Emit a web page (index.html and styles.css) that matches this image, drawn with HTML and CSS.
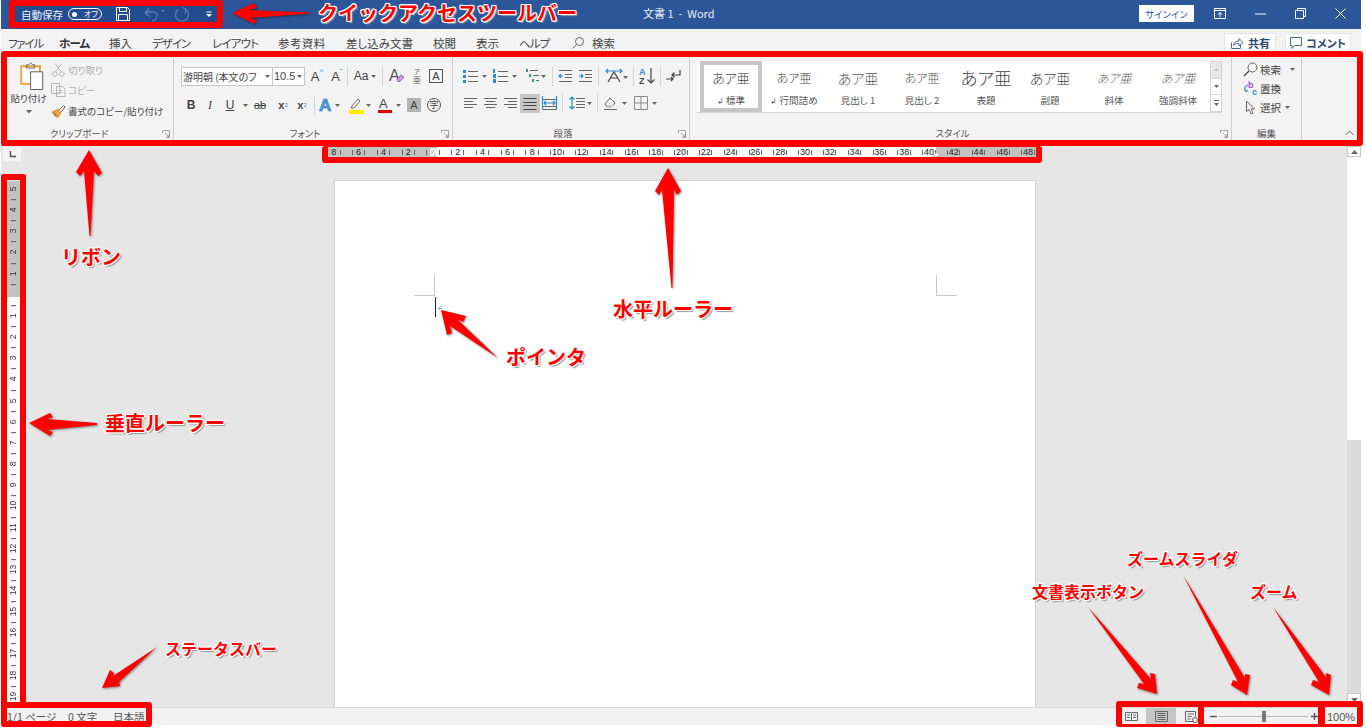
FILE: index.html
```html
<!DOCTYPE html>
<html lang="ja">
<head>
<meta charset="utf-8">
<title>Word UI</title>
<link rel="stylesheet" href="styles.css">
</head>
<body>
<div class="app">
  <header class="titlebar">
    <div class="qat">
      <span class="autosave">自動保存</span>
      <span class="toggle"><i class="knob"></i><span class="off">オフ</span></span>
      <svg class="qi-save" width="16" height="16" viewBox="0 0 16 16"><path class="wl" d="M1.500 1.500h11l2 2v11h-13zM4.500 1.500v4h7v-4M3.500 14.500v-6h9v6"/></svg>
      <svg class="qi-undo" width="24" height="16" viewBox="0 0 24 16"><path class="fl" d="M2 7.500 6 2M2 7.500l5 3M2 7.500c6-3 12-2 12 2 0 3-3 5-5 5.500"/><path class="fc" d="M18 4h4l-2 2.500z"/></svg>
      <svg class="qi-redo" width="18" height="16" viewBox="0 0 18 16"><path class="fl" d="M5 3.500a6.500 6.500 0 1 0 8 0M9 1l4 2.500-1 4"/></svg>
      <svg class="qi-more" width="8" height="8" viewBox="0 0 8 8"><path class="wl" d="M1.500 2h5"/><path class="wf" d="M1 4h6l-3 3z"/></svg>
    </div>
    <div class="doctitle">文書 1&nbsp;&nbsp;-&nbsp;&nbsp;Word</div>
    <div class="winctl">
      <span class="signin">サインイン</span>
      <span class="wb"><svg width="12" height="11" viewBox="0 0 12 11"><path class="wl" d="M.5.500h11v10H.500zM.5 2.500h11M6 9V4.500M4 6.500l2-2 2 2"/></svg></span>
      <span class="wb"><svg width="11" height="2" viewBox="0 0 11 2"><path class="wl" d="M0 1h11"/></svg></span>
      <span class="wb"><svg width="11" height="11" viewBox="0 0 11 11"><path class="wl" d="M.5 2.500h8v8h-8zM2.500 2.500v-2h8v8h-2"/></svg></span>
      <span class="wb"><svg width="11" height="11" viewBox="0 0 11 11"><path class="wl" d="M.5.500l10 10M10.500.500l-10 10"/></svg></span>
    </div>
  </header>

  <nav class="tabs">
    <span class="tab t-file">ファイル</span>
    <span class="tab t-home">ホーム</span>
    <span class="tab t-ins">挿入</span>
    <span class="tab t-des">デザイン</span>
    <span class="tab t-lay">レイアウト</span>
    <span class="tab t-ref">参考資料</span>
    <span class="tab t-mail">差し込み文書</span>
    <span class="tab t-rev">校閲</span>
    <span class="tab t-view">表示</span>
    <span class="tab t-help">ヘルプ</span>
    <svg class="t-lens" width="14" height="14" viewBox="0 0 14 14"><circle class="ln" cx="8.500" cy="5.500" r="4"/><path class="ln" d="M5.500 8.500l-4 4"/></svg>
    <span class="tab t-search">検索</span>
    <span class="sharebtn s1"><svg width="14" height="13" viewBox="0 0 14 13"><path class="bl" d="M1.500 5.500v6h9v-4M3.500 8.500c0-3 2.500-4.500 5.500-4.500V1.500l4 4-4 3.500V6.500c-2 0-4 .5-5.500 2"/></svg><b>共有</b></span>
    <span class="sharebtn s2"><svg width="12" height="12" viewBox="0 0 12 12"><path class="bl" d="M.500.500h11v8H4.500l-2.500 3v-3H.500z"/></svg><b>コメント</b></span>
  </nav>

  <section class="ribbon">
    <div class="group g-clip">
      <div class="clipbody">
        <div class="paste">
          <svg width="26" height="28" viewBox="0 0 26 30"><path class="or" d="M1.500 4.500h20v19h-20z"/><path class="ln" d="M7 4.500V3h2.500L11.500.8 13.500 3H16v3.500H7z"/><path class="dk" d="M11.500 10.500h13v19h-13z"/></svg>
          <span class="pastelabel">貼り付け</span>
          <svg class="pastecar" width="6" height="4" viewBox="0 0 6 4"><path class="cr" d="M0 0h6L3 3.500z"/></svg>
        </div>
        <div class="cliplist">
          <div class="clipitem dim"><svg width="13" height="14" viewBox="0 0 13 14"><path class="gl" d="M3 .5l6 8M10 .5l-6 8"/><circle class="gl" cx="3" cy="11" r="2.300"/><circle class="gl" cx="10" cy="11" r="2.300"/></svg><span>切り取り</span></div>
          <div class="clipitem dim"><svg width="15" height="14" viewBox="0 0 15 14"><path class="gl" d="M.5.500h8v10h-8zM5.500 3.500h6l2.500 2.500v7.500H5.500zM7.500 7.500h4M7.500 9.500h4"/></svg><span>コピー</span></div>
          <div class="clipitem"><svg width="15" height="14" viewBox="0 0 15 14"><path class="brush" d="M1 8l6-3 3 4-3 4.500C5 13 2 11 1 8z"/><path class="ln" d="M8 6l4.500-4.500 1.500 1.500L10 8"/><path class="ln" d="M3 8.500l2.500 3.500"/></svg><span>書式のコピー/貼り付け</span></div>
        </div>
      </div>
      <div class="glabel">クリップボード</div>
      <svg class="launch" width="8" height="8" viewBox="0 0 8 8"><path class="lg" d="M.5 3V.5H7.500v7H5M3 3l4 4M4 7h3V4"/></svg>
    </div>

    <div class="group g-font">
      <div class="row r1">
        <div class="fbox fname"><span>游明朝 (本文のフ</span><svg width="5" height="3" viewBox="0 0 5 3"><path class="cr" d="M0 0h5L2.500 3z"/></svg></div>
        <div class="fbox fsize"><span>10.5</span><svg width="5" height="3" viewBox="0 0 5 3"><path class="cr" d="M0 0h5L2.500 3z"/></svg></div>
        <span class="btn w20 mlt2 tt big">A<sup class="up">^</sup></span>
        <span class="btn w20 tt big">A<sup class="dn">ˇ</sup></span>
        <span class="sep"></span>
        <span class="btn w34 tt aa">Aa<svg width="5" height="3" viewBox="0 0 5 3"><path class="cr" d="M0 0h5L2.500 3z"/></svg></span>
        <span class="sep"></span>
        <span class="btn w28"><svg width="16" height="14" viewBox="0 0 16 14"><text class="ia" x="0" y="12">A</text><path class="pur" d="M8 10l4-4 3 2-4 4.500H9z"/></svg></span>
        <span class="btn w12 furi"><small>ア</small><em>亜</em></span>
        <span class="btn w26"><span class="boxa">A</span></span>
      </div>
      <div class="row r2">
        <span class="btn w20 tb">B</span>
        <span class="btn w18 ti">I</span>
        <span class="btn w22 tu">U</span>
        <span class="btn w8"><svg width="5" height="3" viewBox="0 0 5 3"><path class="cr" d="M0 0h5L2.500 3z"/></svg></span>
        <span class="btn w22 ts">ab</span>
        <span class="btn w24 tx">x<sub>2</sub></span>
        <span class="btn w14 tx">x<sup>2</sup></span>
        <span class="sep ml5"></span>
        <span class="btn w28"><svg width="28" height="18" viewBox="0 0 28 18"><text class="ae" x="4" y="15">A</text><path class="cr" d="M20 8h5l-2.500 3z"/></svg></span>
        <span class="btn w28"><svg width="28" height="18" viewBox="0 0 28 18"><path class="bp" d="M9 10l6-7 2 2-6 7H8z"/><rect class="yl" x="6" y="14" width="15" height="4"/><path class="cr" d="M23 8h5l-2.500 3z"/></svg></span>
        <span class="btn w30"><svg width="30" height="18" viewBox="0 0 30 18"><text class="ab" x="8" y="12">A</text><rect class="rd" x="7" y="14" width="14" height="3"/><path class="cr" d="M25 8h5l-2.500 3z"/></svg></span>
        <span class="btn w26"><span class="shaded">A</span></span>
        <span class="btn w14"><span class="circ">字</span></span>
      </div>
      <div class="glabel">フォント</div>
      <svg class="launch" width="8" height="8" viewBox="0 0 8 8"><path class="lg" d="M.5 3V.5H7.500v7H5M3 3l4 4M4 7h3V4"/></svg>
    </div>

    <div class="group g-para">
      <div class="row r1">
        <svg width="30" height="16" viewBox="0 0 30 16"><path class="bf" d="M3 2h3v3H3zM3 7h3v3H3zM3 12h3v3H3z"/><path class="ln" d="M8 3.500h10M8 8.500h10M8 13.500h10"/><path class="cr" d="M22 7h5l-2.500 3z"/></svg>
        <svg width="30" height="16" viewBox="0 0 30 16"><path class="bf" d="M3 1h2v4H3zM3 6h3v4H3zM3 11h3v4H3z"/><path class="ln" d="M8 3.500h10M8 8.500h10M8 13.500h10"/><path class="cr" d="M22 7h5l-2.500 3z"/></svg>
        <svg width="28" height="16" viewBox="0 0 28 16"><path class="bf" d="M6 1h2v3H6zM9 6h2v3H9zM12 11h2v3h-2z"/><path class="ln" d="M10 2.500h8M13 7.500h6M16 12.500h3"/><path class="cr" d="M21 7h5l-2.500 3z"/></svg>
        <span class="sep ml4"></span>
        <svg width="24" height="16" viewBox="0 0 24 16"><path class="ln" d="M6 2.500h13M12 6.500h7M12 9.500h7M6 13.500h13"/><path class="bs" d="M10 8H6M8 6L6 8l2 2"/></svg>
        <svg width="20" height="16" viewBox="0 0 20 16"><path class="ln" d="M2 2.500h13M8 6.500h7M8 9.500h7M2 13.500h13"/><path class="bs" d="M2 8h4M4 6l2 2-2 2"/></svg>
        <span class="sep ml1"></span>
        <svg width="34" height="16" viewBox="0 0 34 16"><path class="dk2" d="M9 14L15 4l6 10M11 10h8"/><path class="bs" d="M7 3h16M9 1L7 3l2 2M21 1l2 2-2 2"/><path class="cr" d="M24 8h5l-2.500 3z"/></svg>
        <span class="sep"></span>
        <svg width="26" height="18" viewBox="0 0 26 18"><text class="az1" x="5" y="8">A</text><text class="az2" x="5" y="17">Z</text><path class="dk2" d="M17 1v15M13.500 12.500L17 16l3.500-3.500"/></svg>
        <span class="sep"></span>
        <svg width="22" height="16" viewBox="0 0 22 16"><path class="dk2" d="M19 2v5h-8M13.500 4.500L11 7l2.500 2.500M5 11h7M10 9l2 2-2 2"/></svg>
      </div>
      <div class="r2p">
        <svg width="20" height="16" viewBox="0 0 20 16"><path class="ln" d="M4 3.500h13M4 6.500h9M4 9.500h13M4 12.500h9"/></svg>
        <svg width="20" height="16" viewBox="0 0 20 16"><path class="ln" d="M4 3.500h13M6 6.500h9M4 9.500h13M6 12.500h9"/></svg>
        <svg width="20" height="16" viewBox="0 0 20 16"><path class="ln" d="M4 3.500h13M8 6.500h9M4 9.500h13M8 12.500h9"/></svg>
        <span class="hl"><svg width="20" height="16" viewBox="0 0 20 16"><path class="dk2" d="M3.500 2.500h13M3.500 6.500h13M3.500 9.500h13M3.500 13.500h13"/></svg></span>
        <svg width="21" height="16" viewBox="0 0 21 16"><path class="bs" d="M2.500 1v14M16.500 1v14"/><path class="ln" d="M3 4.500h13M3 11.500h13M3 14.500h13"/><path class="bs" d="M4 8h11M6 6L4 8l2 2M13 6l2 2-2 2"/></svg>
        <span class="sep ml1"></span>
        <svg width="34" height="16" viewBox="0 0 34 16"><path class="bs" d="M9 2v12M6.500 4.500L9 2l2.500 2.500M6.500 11.500L9 14l2.500-2.500"/><path class="ln" d="M13 3.500h9M13 6.500h9M13 9.500h9M13 12.500h9"/><path class="cr" d="M24 7h5l-2.500 3z"/></svg>
        <span class="sep"></span>
        <svg width="34" height="16" viewBox="0 0 34 16"><path class="ln" d="M6 14.500h13M7 9l5-6 5 5-4 4H9z"/><path class="bf2" d="M9 10h7l-3 3H9z"/><path class="cr" d="M24 7h5l-2.500 3z"/></svg>
        <svg width="28" height="16" viewBox="0 0 28 16"><path class="ln lt" d="M2.500 1.500h13v13h-13zM9 1.500v13M2.500 8h13"/><path class="cr" d="M20 7h5l-2.500 3z"/></svg>
      </div>
      <div class="glabel">段落</div>
      <svg class="launch" width="8" height="8" viewBox="0 0 8 8"><path class="lg" d="M.5 3V.5H7.500v7H5M3 3l4 4M4 7h3V4"/></svg>
    </div>

    <div class="group g-style">
      <div class="gallery">
        <div class="sty on"><span class="sm s13">あア亜</span><span class="sl"><i>↲</i> 標準</span></div>
        <div class="sty"><span class="sm s12">あア亜</span><span class="sl"><i>↲</i> 行間詰め</span></div>
        <div class="sty"><span class="sm s14 so">あア亜</span><span class="sl">見出し 1</span></div>
        <div class="sty"><span class="sm s12 so">あア亜</span><span class="sl">見出し 2</span></div>
        <div class="sty"><span class="sm s17">あア亜</span><span class="sl">表題</span></div>
        <div class="sty"><span class="sm s14">あア亜</span><span class="sl">副題</span></div>
        <div class="sty"><span class="sm s12 it">あア亜</span><span class="sl">斜体</span></div>
        <div class="sty"><span class="sm s12 it">あア亜</span><span class="sl">強調斜体</span></div>
        <div class="gscroll">
          <span><svg width="5" height="3" viewBox="0 0 5 3"><path class="crl" d="M0 3h5L2.500 0z"/></svg></span>
          <span><svg width="5" height="3" viewBox="0 0 5 3"><path class="cr" d="M0 0h5L2.500 3z"/></svg></span>
          <span><svg width="5" height="6" viewBox="0 0 5 6"><path class="cr" d="M0 0h5v1H0zM0 3h5L2.500 6z"/></svg></span>
        </div>
      </div>
      <div class="glabel">スタイル</div>
      <svg class="launch" width="8" height="8" viewBox="0 0 8 8"><path class="lg" d="M.5 3V.5H7.500v7H5M3 3l4 4M4 7h3V4"/></svg>
    </div>

    <div class="group g-edit">
      <div class="editlist">
        <div class="edititem"><svg width="16" height="14" viewBox="0 0 16 14"><circle class="ln" cx="9.500" cy="5.500" r="4.500"/><path class="dk2" d="M6 9l-5 5"/></svg><span>検索</span><svg class="ecar" width="5" height="3" viewBox="0 0 5 3"><path class="cr" d="M0 0h5L2.500 3z"/></svg></div>
        <div class="edititem"><svg width="16" height="14" viewBox="0 0 16 14"><text class="rb" x="5" y="7">b</text><text class="rc" x="9" y="14">c</text><path class="bs" d="M5 4C1.500 5 1 8 3 10M1.500 8.500L3 10.500l2-1"/></svg><span>置換</span></div>
        <div class="edititem"><svg width="16" height="15" viewBox="0 0 16 15"><path class="ln" d="M3.500 1v10.500l2.500-2 2 4.500 2-1-2-4h3.500z"/></svg><span>選択</span><svg class="ecar2" width="5" height="3" viewBox="0 0 5 3"><path class="cr" d="M0 0h5L2.500 3z"/></svg></div>
      </div>
      <div class="glabel nopad">編集</div>
    </div>
    <svg class="collapse" width="9" height="6" viewBox="0 0 9 6"><path class="ln" d="M.5 5L4.500 1l4 4"/></svg>
  </section>

  <main class="work">
    <aside class="leftpane">
      <div class="tabstop"><svg width="7" height="7" viewBox="0 0 7 7"><path class="dk3" d="M1.500 0v5.500H7"/></svg></div>
      <div class="vruler">
        <div class="vinner">
          <span>5</span><span>4</span><span>3</span><span>2</span><span>1</span><span></span>
          <span>1</span><span>2</span><span>3</span><span>4</span><span>5</span><span>6</span><span>7</span><span>8</span><span>9</span><span>10</span><span>11</span><span>12</span><span>13</span><span>14</span><span>15</span><span>16</span><span>17</span><span>18</span><span>19</span>
        </div>
      </div>
    </aside>
    <div class="center">
      <div class="hruler">
        <div class="hinner">
          <span><i>8</i></span><span><i>6</i></span><span><i>4</i></span><span><i>2</i></span><span><i></i></span>
          <span><i>2</i></span><span><i>4</i></span><span><i>6</i></span><span><i>8</i></span><span><i>10</i></span><span><i>12</i></span><span><i>14</i></span><span><i>16</i></span><span><i>18</i></span><span><i>20</i></span><span><i>22</i></span><span><i>24</i></span><span><i>26</i></span><span><i>28</i></span><span><i>30</i></span><span><i>32</i></span><span><i>34</i></span><span><i>36</i></span><span><i>38</i></span><span><i>40</i></span><span><i>42</i></span><span><i>44</i></span><span><i>46</i></span><span><i>48</i></span>
        </div>
        <svg class="ind il" width="9" height="10" viewBox="0 0 9 10"><path class="indp" d="M.5.500h8L4.500 5l4 4.500h-8L4.500 5z"/></svg>
        <svg class="ind ir" width="9" height="10" viewBox="0 0 9 10"><path class="indp" d="M4.500 5 8.500 9.500h-8z"/></svg>
      </div>
      <div class="page">
        <span class="crop tl"></span>
        <span class="crop tr"></span>
        <span class="caret"></span>
        <span class="para">↲</span>
      </div>
    </div>
    <div class="vscroll">
      <span class="sbtn up"><svg width="7" height="4" viewBox="0 0 7 4"><path class="cr" d="M0 4h7L3.500 0z"/></svg></span>
      <span class="thumb"></span>
      <span class="track"></span>
      <span class="sbtn"><svg width="7" height="4" viewBox="0 0 7 4"><path class="cr" d="M0 0h7L3.500 4z"/></svg></span>
    </div>
  </main>

  <footer class="status">
    <span class="st st1">1/1 ページ</span>
    <span class="st st2">0 文字</span>
    <span class="st st3">日本語</span>
    <div class="stright">
      <span class="view"><svg width="13" height="11" viewBox="0 0 13 11"><path class="ln" d="M.5 1.500h5.500l.5.500.5-.5h5.500v8H7l-.5.500-.5-.5H.5zM6.500 2v8M2 4h3M2 6.500h3M8 4h3M8 6.500h3"/></svg></span>
      <span class="view act"><svg width="13" height="11" viewBox="0 0 13 11"><path class="ln" d="M.5.500h12v10H.500zM2.500 2.500h8M2.500 4.500h8M2.500 6.500h8M2.500 8.500h8"/></svg></span>
      <span class="view"><svg width="13" height="12" viewBox="0 0 13 12"><path class="ln" d="M8.500 10.500H.5V.5h10v5M2.500 3h6M2.500 5.500h4M2.500 8h3"/><circle class="ln" cx="10" cy="9" r="2.500"/></svg></span>
      <span class="zm zm1"><svg width="7" height="1" viewBox="0 0 7 1"><path class="dk3" d="M0 .5h7"/></svg></span>
      <span class="slider"><i class="sthumb"></i></span>
      <span class="zm"><svg width="7" height="7" viewBox="0 0 7 7"><path class="dk3" d="M0 3.500h7M3.500 0v7"/></svg></span>
      <span class="pct">100%</span>
    </div>
  </footer>
</div>

<div class="overlay">
  <svg class="arrows" width="1366" height="728" viewBox="0 0 1366 728">
    <path d="M232 13 254 3 257 8 249 10 310 12.500V13.500L249 18 257 20 254 24Z"/>
    <path d="M89 150 102 173 98 176 94 171 90.500 236H89.500L84 171 80 176 76 172Z"/>
    <path d="M668 168 681 191 677 195 674 190 672.500 288H671.500L662 190 659 195 655 191Z"/>
    <path d="M441 310 466 316 463 322 457 319 498 358 450 326 452 333 447 335Z"/>
    <path d="M29 423 50 413 53 417 47 419 97 423V425L47 430 53 432 50 436Z"/>
    <path d="M102 688 110 670 114 673 113 676 157 647 119 682 120 686Z"/>
    <path d="M1157 694 1137 688 1139 683 1144 684 1088 607 1151 679 1150 673 1155 674Z"/>
    <path d="M1247 695 1231 685 1233 680 1238 682 1183 575 1245 678 1245 674 1250 675Z"/>
    <path d="M1329 695 1311 685 1313 680 1319 682 1273 607 1326 677 1326 673 1331 675Z"/>
  </svg>
  <div class="frame f-qat"></div>
  <div class="frame f-rib"></div>
  <div class="frame f-hr"></div>
  <div class="frame f-vr"></div>
  <div class="frame f-st"></div>
  <div class="frame f-vw"></div>
  <div class="frame f-zm"></div>
  <div class="frame f-pc"></div>
  <span class="note big n-qat">クイックアクセスツールバー</span>
  <span class="note big n-rib">リボン</span>
  <span class="note big n-hr">水平ルーラー</span>
  <span class="note big n-ptr">ポインタ</span>
  <span class="note big n-vr">垂直ルーラー</span>
  <span class="note sm n-st">ステータスバー</span>
  <span class="note sm n-vw">文書表示ボタン</span>
  <span class="note sm n-zs">ズームスライダ</span>
  <span class="note sm n-zm">ズーム</span>
</div>
</body>
</html>
```

FILE: styles.css
```css
* { box-sizing: border-box; }
html, body { margin: 0; height: 100%; }
body {
  background: #fff;
  overflow: hidden;
  font-family: "Noto Sans CJK JP", "Noto Sans", sans-serif;
  font-feature-settings: "palt";
  color: #444;
  padding: 0 5px 3px 1px;
}
svg { display: block; flex: none; overflow: visible; }
.app { display: flex; flex-direction: column; height: 725px; width: 1360px; }

/* shared svg paints */
.ln { fill: none; stroke: #666; stroke-width: 1; }
.lt { stroke: #8a8a8a; }
.dk2 { fill: none; stroke: #444; stroke-width: 1.200; }
.dk3 { fill: none; stroke: #555; stroke-width: 1.400; }
.gl { fill: none; stroke: #b5b5b5; stroke-width: 1; }
.lg { fill: none; stroke: #8f8f8f; stroke-width: .8; }
.cr { fill: #666; }
.crl { fill: #c4c4c4; }
.wl { fill: none; stroke: #fff; stroke-width: 1; }
.wf { fill: #fff; }
.fl { fill: none; stroke: #5b7cb2; stroke-width: 1.300; }
.fc { fill: #5b7cb2; }
.bl { fill: none; stroke: #4a6a95; stroke-width: 1; }
.bf { fill: #2a8ad4; }
.bf2 { fill: #c9c9c9; }
.bs { fill: none; stroke: #2a8ad4; stroke-width: 1.200; }
.or { fill: #fff; stroke: #f0a040; stroke-width: 2; }
.dk { fill: #fff; stroke: #555; stroke-width: 1; }
.brush { fill: #f0a040; stroke: #c77a1c; stroke-width: .6; }
.pur { fill: #c79ad8; stroke: #8d4ea8; stroke-width: .8; }
.bp { fill: #fff; stroke: #666; stroke-width: 1; }
.yl { fill: #ffee00; }
.rd { fill: #e60000; }

/* title bar */
.titlebar { flex: 0 0 29px; background: linear-gradient(90deg, #2b579a 14px, #234c8e 14px, #234c8e 216px, #2b579a 216px); display: flex; align-items: center; color: #fff; padding-left: 20px; }
.qat { flex: 0 0 622px; display: flex; align-items: center; margin-top: -1px; }
.autosave { font-size: 10.500px; width: 47px; white-space: nowrap; color: #eef2f8; }
.toggle { width: 34px; height: 12px; border: 1px solid #fff; border-radius: 6px; display: flex; align-items: center; padding-left: 3px; }
.knob { width: 5px; height: 5px; border-radius: 50%; background: #fff; }
.off { font-size: 8px; margin-left: 7px; line-height: 10px; white-space: nowrap; }
.qi-save { margin-left: 13px; }
.qi-undo { margin-left: 12px; }
.qi-redo { margin-left: 6px; }
.qi-more { margin-left: 14px; }
.doctitle { font-size: 11px; color: #e8edf5; white-space: nowrap; margin-top: -3px; }
.winctl { margin-left: auto; display: flex; align-items: center; padding-right: 1px; margin-top: -2px; }
.signin { width: 55px; height: 17px; background: #fff; color: #2b579a; font-size: 9.500px; display: flex; align-items: center; justify-content: center; margin-right: 6px; white-space: nowrap; }
.wb { width: 40px; height: 27px; display: flex; align-items: center; justify-content: center; }

/* tabs */
.tabs { flex: 0 0 23px; background: #f3f3f3; display: flex; align-items: center; font-size: 11.500px; color: #444; position: relative; }
.tab { white-space: nowrap; line-height: 18px; padding-top: 5px; }
.t-file { margin-left: 7px; width: 51px; letter-spacing: -1.200px; }
.t-home { width: 50px; font-weight: 700; color: #333; letter-spacing: -.8px; }
.t-ins { width: 43px; }
.t-des { width: 60px; letter-spacing: -1px; }
.t-lay { width: 66px; letter-spacing: -.8px; }
.t-ref { width: 68px; letter-spacing: .4px; }
.t-mail { width: 87px; }
.t-rev { width: 43px; }
.t-view { width: 43px; }
.t-help { width: 52px; letter-spacing: -.8px; }
.t-lens { margin-top: 5px; }
.t-search { margin-left: 7px; }
.sharebtn { height: 19px; margin-top: 4px; background: #fff; border: 1px solid #e4e4e4; border-bottom: 0; display: flex; align-items: center; justify-content: center; gap: 4px; font-size: 11px; color: #2b4a73; white-space: nowrap; }
.s1 { width: 52px; margin-left: 609px; }
.s2 { width: 66px; margin-left: 9px; }

/* ribbon */
.ribbon { flex: 0 0 94px; background: #f3f3f3; display: flex; position: relative; border-bottom: 1px solid #aaa; }
.group { display: flex; flex-direction: column; border-right: 1px solid #cfcfcf; position: relative; height: 83px; margin-top: 5px; }
.g-clip { width: 173px; padding-top: 5px; }
.g-font { width: 279px; padding-left: 7px; padding-top: 9px; }
.g-para { width: 237px; padding-left: 7px; padding-top: 9px; }
.g-style { width: 542px; padding-left: 7px; padding-top: 4px; }
.g-edit { width: 70px; padding-top: 4px; }
.glabel { margin-top: auto; height: 14px; line-height: 14px; font-size: 9.500px; text-align: center; padding-right: 16px; color: #555; white-space: nowrap; }
.g-font .glabel, .g-para .glabel, .g-style .glabel { margin-left: -7px; }
.nopad { padding-right: 0; }
.launch { position: absolute; right: 3px; bottom: 2px; }
.collapse { position: absolute; left: 1344px; top: 78px; }

.clipbody { display: flex; }
.paste { width: 49px; padding-left: 6px; display: flex; flex-direction: column; align-items: center; }
.paste > svg:first-child { margin-left: 7px; }
.pastelabel { font-size: 9.500px; margin-top: 1px; line-height: 14px; white-space: nowrap; color: #444; }
.pastecar { margin-top: 5px; }
.cliplist { display: flex; flex-direction: column; gap: 5.500px; }
.clipitem { display: flex; align-items: center; gap: 2px; font-size: 9.500px; height: 15px; white-space: nowrap; padding-left: 1px; }
.clipitem svg { width: 15px; }
.dim { color: #b0b0b0; }

.row { display: flex; align-items: center; height: 20px; }
.r2 { margin-top: 9px; }
.r2p { display: flex; align-items: center; height: 20px; margin-top: 7px; }
.fbox { height: 19px; background: #fff; border: 1px solid #c6c6c6; display: flex; align-items: center; font-size: 10px; white-space: nowrap; overflow: hidden; color: #444; padding-left: 1px; justify-content: space-between; padding-right: 2px; }
.fname { width: 92px; }
.fsize { width: 33px; margin-left: -1px; font-family: "Liberation Sans", sans-serif; font-size: 11px; }
.fsize span { width: 21px; overflow: hidden; }
.btn { display: flex; align-items: center; justify-content: center; height: 20px; flex: none; }
.w8 { width: 8px; } .w12 { width: 12px; } .w14 { width: 14px; } .w18 { width: 18px; }
.w20 { width: 20px; } .w22 { width: 22px; } .w24 { width: 24px; } .w26 { width: 26px; }
.w28 { width: 28px; } .w30 { width: 30px; } .w34 { width: 34px; }
.mlt2 { margin-left: 2px; }
.sep { width: 1px; height: 19px; background: #d4d4d4; flex: none; }
.ml1 { margin-left: 1px; } .ml4 { margin-left: 4px; } .ml5 { margin-left: 5px; }
.tt, .tb, .ti, .tu, .ts, .tx { font-family: "Liberation Sans", sans-serif; color: #444; }
.big { font-size: 13px; }
.big sup { font-size: 8px; color: #2a8ad4; line-height: 0; margin-top: -8px; }
.aa { font-size: 12px; gap: 3px; }
.furi { flex-direction: column; line-height: 8px; }
.furi small { font-size: 6px; }
.furi em { font-size: 8px; font-style: normal; color: #666; }
.boxa { width: 14px; height: 14px; border: 1px solid #555; font: 11px/12px "Liberation Sans", sans-serif; text-align: center; }
.tb { font-size: 12px; font-weight: 700; }
.ti { font: italic 12px "Liberation Serif", serif; }
.tu { font-size: 12px; text-decoration: underline; }
.ts { font-size: 11px; text-decoration: line-through; }
.tx { font-size: 11px; font-weight: 700; }
.tx sub, .tx sup { font-size: 6px; color: #2a8ad4; font-weight: 400; line-height: 0; }
.ia { font: 16px "Liberation Sans", sans-serif; fill: #555; }
.ae { font: 700 17px "Liberation Sans", sans-serif; fill: #4da3e0; stroke: #1d6fb8; stroke-width: .6; }
.ab { font: 13px "Liberation Sans", sans-serif; fill: #444; }
.shaded { width: 14px; height: 14px; background: #b4b4b4; font: 11px/14px "Liberation Sans", sans-serif; text-align: center; }
.circ { width: 14px; height: 14px; border: 1px solid #555; border-radius: 50%; font-size: 9px; line-height: 12px; text-align: center; flex: none; }
.hl { background: #c6c6c6; display: block; height: 19px; padding-top: 2px; }
.az1 { font: 700 9px "Liberation Sans", sans-serif; fill: #2a8ad4; }
.az2 { font: 700 9px "Liberation Sans", sans-serif; fill: #444; }
.rb { font: 700 9px "Liberation Sans", sans-serif; fill: #a64bc4; }
.rc { font: 700 9px "Liberation Sans", sans-serif; fill: #2a8ad4; }

/* styles gallery */
.gallery { display: flex; width: 525px; height: 52px; background: #fff; border-bottom: 1px solid #d4d4d4; padding-left: 3px; }
.sty { width: 64px; display: flex; flex-direction: column; align-items: center; padding-top: 6px; flex: none; }
.sty.on { width: 62px; border: 4px solid #c6c6c6; padding-top: 2px; }
.sm { height: 22px; line-height: 22px; font-weight: 300; color: #444; white-space: nowrap; }
.sl { font-size: 9.500px; line-height: 14px; margin-top: 4px; color: #555; white-space: nowrap; }
.sl i { font-style: normal; font-size: 8px; }
.s12 { font-size: 12px; } .s13 { font-size: 13px; } .s14 { font-size: 14px; } .s17 { font-size: 17.500px; }
.so { color: #555; }
.it { font-style: italic; color: #666; }
.gscroll { width: 13px; display: flex; flex-direction: column; }
.gscroll span { flex: 1; border: 1px solid #d4d4d4; border-top-width: 0; display: flex; align-items: center; justify-content: center; }
.gscroll span:first-child { background: #e8e8e8; border-top-width: 1px; }

.editlist { display: flex; flex-direction: column; padding: 0 0 0 11px; gap: 3px; }
.edititem { display: flex; align-items: center; height: 16px; font-size: 10.500px; gap: 1px; white-space: nowrap; }
.ecar { margin-left: 8px; }
.ecar2 { margin-left: 3px; }

/* workspace */
.work { flex: 1; min-height: 0; background: #e6e6e6; display: flex; overflow: hidden; }
.leftpane { width: 327px; flex: none; display: flex; flex-direction: column; }
.tabstop { width: 18px; height: 14px; margin: 1px 0 0 2px; background: #f4f4f4; display: flex; align-items: center; justify-content: center; }
.vruler { width: 13px; margin: 20px 0 0 6px; flex: 1; background: linear-gradient(#c2c2c2 116px, #fff 116px); overflow: hidden; }
.vinner { margin-top: -3px; display: flex; flex-direction: column; }
.vinner span { height: 21.170px; flex: none; position: relative; display: flex; align-items: center; justify-content: center; font: 8.500px/9px "Liberation Sans", sans-serif; color: #333; writing-mode: vertical-rl; transform: rotate(180deg); }
.vinner span::before { content: ""; position: absolute; left: 4px; width: 5px; height: 1px; background: #555; bottom: 0; }
.center { width: 708px; flex: none; display: flex; flex-direction: column; }
.hruler { height: 11px; margin-top: 1px; background: linear-gradient(90deg, #c2c2c2 102px, #fff 102px, #fff 608px, #c2c2c2 608px); overflow: hidden; flex: none; position: relative; }
.hinner { display: flex; margin-left: -6.600px; height: 11px; align-items: center; }
.hinner span { width: 24.800px; flex: none; display: flex; justify-content: center; }
.hinner i { width: 13.400px; height: 5px; border: solid #666; border-width: 0 1px; font: normal 9px/5px "Liberation Sans", sans-serif; color: #222; text-align: center; display: block; white-space: nowrap; }
.ind { position: absolute; top: 0; }
.il { left: 100px; }
.ir { left: 604px; }
.indp { fill: #fff; stroke: #aaa; stroke-width: .8; }
.page { position: relative; margin: 22px 0 0 6px; width: 702px; flex: 1; background: #fff; border: solid #d2d2d2; border-width: 1px 1px 0; }
.crop { position: absolute; top: 94px; width: 21px; height: 21px; border-bottom: 1px solid #c8c8c8; }
.tl { left: 79px; border-right: 1px solid #c8c8c8; }
.tr { left: 601px; border-left: 1px solid #c8c8c8; }
.caret { position: absolute; left: 100px; top: 116px; width: 1px; height: 20px; background: #222; }
.para { position: absolute; left: 102px; top: 122px; font-size: 7px; line-height: 8px; color: #888; }
.vscroll { width: 14px; flex: none; margin-left: 311px; display: flex; flex-direction: column; }
.sbtn { flex: 0 0 14px; background: #fff; border: 1px solid #c8c8c8; display: flex; align-items: center; justify-content: center; }
.sbtn.up { flex-basis: 11px; }
.thumb { flex: 0 0 283px; background: #fff; }
.track { flex: 1; background: #dbdbdb; }

/* status bar */
.status { flex: 0 0 18px; background: #f1f1f1; border-top: 1px solid #d8d8d8; display: flex; align-items: center; font-size: 10.500px; color: #555; white-space: nowrap; }
.st { line-height: 17px; }
.st1 { margin-left: 6px; width: 61px; }
.st2 { width: 45px; }
.st3 { width: 40px; }
.stright { margin-left: auto; display: flex; align-items: center; height: 17px; }
.view { width: 30px; height: 17px; display: flex; align-items: center; justify-content: center; }
.act { background: #c6c6c6; }
.zm { width: 12px; display: flex; justify-content: center; }
.zm1 { margin-left: 1px; }
.slider { width: 89px; height: 1px; background: #bbb; position: relative; }
.sthumb { position: absolute; left: 43px; top: -5px; width: 4px; height: 11px; background: #777; }
.pct { font-family: "Liberation Sans", sans-serif; font-size: 11px; width: 41px; padding-left: 7px; color: #555; }

/* annotations layered over the screenshot */
.overlay { position: absolute; left: 0; top: 0; width: 1366px; height: 728px; pointer-events: none; }
.arrows { position: absolute; left: 0; top: 0; fill: #f00; filter: drop-shadow(1px 1px 1px rgba(0,0,0,.45)); }
.frame { position: absolute; border: 6px solid #f00; border-radius: 3px; }
.f-qat { left: 9px; top: 0; width: 214px; height: 28px; }
.f-rib { left: 1px; top: 51px; width: 1362px; height: 95px; }
.f-hr { left: 322px; top: 146px; width: 720px; height: 17px; border-top-width: 1px; }
.f-vr { left: 1px; top: 174px; width: 25px; height: 534px; border-bottom: 0; }
.f-st { left: 1px; top: 702px; width: 151px; height: 25px; }
.f-vw { left: 1116px; top: 701px; width: 88px; height: 26px; border-bottom-width: 3px; }
.f-zm { left: 1198px; top: 701px; width: 126px; height: 26px; border-bottom-width: 3px; }
.f-pc { left: 1319px; top: 701px; width: 44px; height: 26px; border-bottom-width: 3px; }
.note { position: absolute; color: #f00; font-weight: 700; font-feature-settings: normal; white-space: nowrap; text-shadow: 1px 0 #fff, -1px 0 #fff, 0 1px #fff, 0 -1px #fff, 1px 1px #fff, -1px 1px #fff, 1px -1px #fff, -1px -1px #fff, 2px 2px 1px #999; }
.note.big { font-size: 20px; line-height: 24px; }
.note.sm { font-size: 16px; line-height: 20px; }
.n-qat { left: 318px; top: 2px; font-family: "Liberation Sans", "Noto Sans CJK JP", sans-serif; }
.n-rib { left: 61px; top: 245px; }
.n-hr { left: 613px; top: 297px; }
.n-ptr { left: 506px; top: 345px; }
.n-vr { left: 105px; top: 411px; }
.n-st { left: 165px; top: 638px; }
.n-vw { left: 1032px; top: 581px; }
.n-zs { left: 1127px; top: 548px; }
.n-zm { left: 1250px; top: 581px; }
```
